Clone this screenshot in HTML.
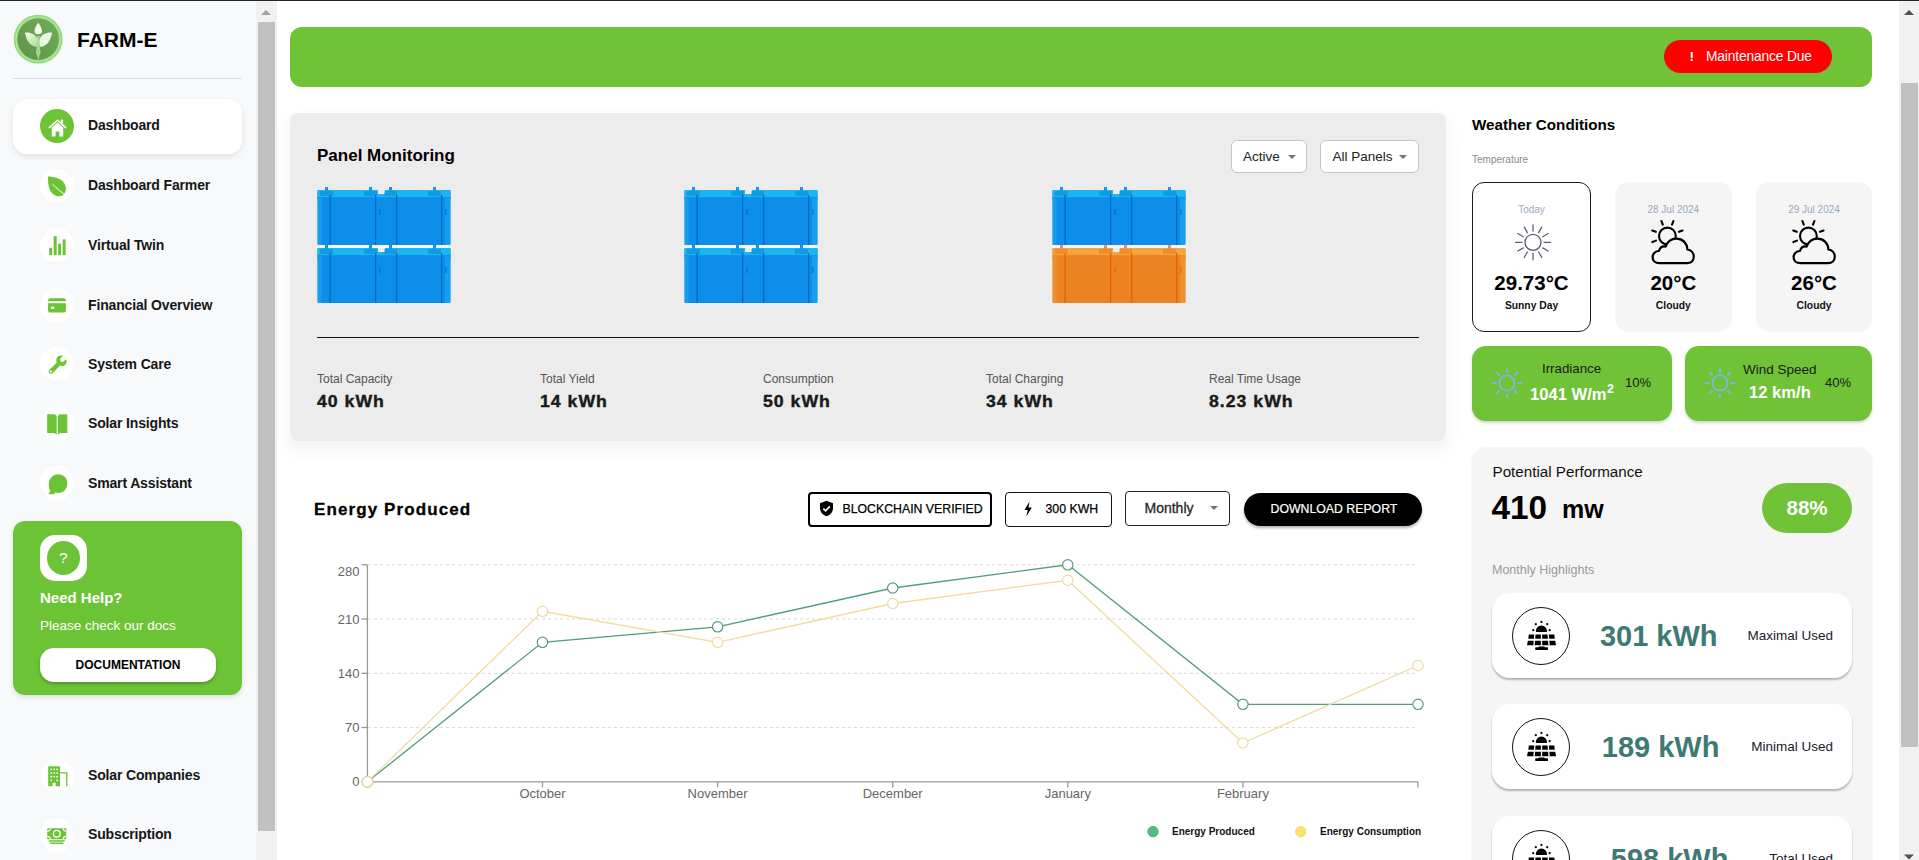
<!DOCTYPE html>
<html><head><meta charset="utf-8">
<style>
*{box-sizing:border-box;margin:0;padding:0}
html,body{width:1919px;height:860px;overflow:hidden;background:#fff;font-family:"Liberation Sans",sans-serif;color:#000}
.a{position:absolute}
.nw{white-space:nowrap}
#topline{left:0;top:0;width:1919px;height:1px;background:#1f2430}
#side{left:0;top:1px;width:256px;height:859px;background:#f8f9fa}
.sb-track{background:#f1f1f1}
.sb-thumb{background:#c1c1c1}
.navic{width:34px;height:34px;border-radius:50%;background:#fff;display:flex;align-items:center;justify-content:center}
.navtx{font-size:14px;font-weight:700;color:#161616;letter-spacing:-0.15px}
.dd{background:#fff;border:1px solid #c4c4c4;border-radius:6px}
.dd span{position:absolute;top:7px;font-size:13.5px;line-height:17px;color:#222;white-space:nowrap}
.dd i{position:absolute;top:14px;width:0;height:0;border-left:4px solid transparent;border-right:4px solid transparent;border-top:4px solid #757575}
.statv{font-size:16.5px;font-weight:700;line-height:19px;color:#1a1a1a;letter-spacing:0.95px;-webkit-text-stroke:0.4px #1a1a1a;transform:scaleX(1.07);transform-origin:0 0}
.ctr{width:120px;text-align:center}
.hcard{width:360px;height:85px;background:#fff;border-radius:18px;box-shadow:0 2px 2px rgba(0,0,0,0.28);display:flex;align-items:center;padding:0 19px 0 20px;justify-content:space-between}
.hcirc{width:58px;height:58px;border:1.8px solid #111;border-radius:50%;display:flex;align-items:center;justify-content:center;flex:none}
.hval{font-size:29px;font-weight:700;color:#3e7a73;line-height:32px;white-space:nowrap}
.hlab{font-size:13.5px;color:#1a1a2a;line-height:16px;white-space:nowrap}
.btx{line-height:15px;color:#000;-webkit-text-stroke:0.25px #000}
</style></head>
<body>
<div id="topline" class="a"></div>
<div id="side" class="a"></div>

<!-- logo -->
<svg class="a" style="left:13px;top:14px" width="50" height="50" viewBox="0 0 50 50">
 <defs><linearGradient id="lg1" x1="0" y1="1" x2="1" y2="0"><stop offset="0" stop-color="#5b9447"/><stop offset="1" stop-color="#72ad5c"/></linearGradient>
 <linearGradient id="lf1" x1="0" y1="0" x2="1" y2="1"><stop offset="0" stop-color="#f4fbef"/><stop offset="1" stop-color="#a9e090"/></linearGradient></defs>
 <circle cx="25.15" cy="25.15" r="24.4" fill="#93da7e"/>
 <circle cx="25.15" cy="25.15" r="22.6" fill="#bfe9ad"/>
 <circle cx="25.15" cy="25.15" r="21.6" fill="#86cf70"/>
 <circle cx="25.15" cy="25.15" r="20.6" fill="url(#lg1)"/>
 <path d="M24 22 H26.5 L27 35.5 C28 37.5 27.6 40 26.5 41 L25.3 46.5 L24 41 C23 40 22.6 37.5 23.5 35.5 Z" fill="#b5dfa0" opacity="0.85"/>
 <path d="M12 18.6 C17 18 22.5 20 24.3 25 C25 28 24.5 31 23.5 33 C18 32.5 13.5 28 12 18.6 Z" fill="url(#lf1)"/>
 <path d="M39.2 18.6 C34 18 28.5 20 26.7 25 C26 28 26.5 31 27.5 33 C33 32.5 37.5 28 39.2 18.6 Z" fill="#eaf7e2"/>
 <path d="M25.2 8.7 C23 11.5 21.4 15 21.6 17.5 C21.8 19.5 23.5 20.3 25.3 20.3 C27.5 20.3 29.2 19 29 17 C28.8 14.5 27.2 11 25.2 8.7 Z" fill="#f3faee"/>
</svg>
<div class="a nw" style="left:77px;top:27.5px;font-size:21px;font-weight:700;line-height:24px">FARM-E</div>
<div class="a" style="left:13px;top:78px;width:229px;height:1px;background:#dcdee2"></div>

<!-- active nav -->
<div class="a" style="left:13px;top:99px;width:229px;height:55px;background:#fff;border-radius:14px;box-shadow:0 3px 6px rgba(0,0,0,0.09)"></div>

<div class="a navic" style="left:40px;top:109px;background:#6cc335"></div><div class="a" style="left:47.5px;top:117.5px;width:19px;height:19px;line-height:0"><svg width="19" height="19" viewBox="0 0 19 19"><path d="M1.3 9.6 L9.5 2.2 L17.7 9.6" stroke="#fff" stroke-width="1.5" fill="none" stroke-linecap="round" stroke-linejoin="round"/><rect x="12.8" y="1.6" width="2.3" height="4.2" fill="#fff"/><path d="M3.8 9.4 L9.5 4.4 L15.2 9.4 V18.5 H11.4 V13.4 H7.6 V18.5 H3.8Z" fill="#fff"/></svg></div>
<div class="a nw navtx" style="left:88px;top:117px;line-height:16px">Dashboard</div>
<div class="a navic" style="left:40px;top:168.7px;background:#fff"></div><div class="a" style="left:47px;top:175.5px;width:21px;height:21px;line-height:0"><svg width="21" height="21" viewBox="0 0 21 21"><path d="M1 0.6 C1 0.6 11.5 0.8 16 5.5 C20 9.7 19.8 16.5 15.8 19.3 C11.5 21.8 5.5 19.5 3 14 C0.8 9.5 1 0.6 1 0.6Z" fill="#6cc335"/><path d="M5.5 8.2 C10 12.5 14.5 16.6 20.5 20.2" stroke="#fff" stroke-width="1" fill="none"/></svg></div>
<div class="a nw navtx" style="left:88px;top:176.6px;line-height:16px">Dashboard Farmer</div>
<div class="a navic" style="left:40px;top:228px;background:#fff"></div><div class="a" style="left:48.5px;top:236px;width:17px;height:20px;line-height:0"><svg width="17" height="20" viewBox="0 0 17 20"><rect x="0.2" y="11.8" width="3" height="7.4" fill="#6cc335"/><rect x="4.7" y="0.2" width="3" height="19" fill="#6cc335"/><rect x="9.1" y="7.7" width="3" height="11.5" fill="#6cc335"/><rect x="13.6" y="3.4" width="3" height="15.8" fill="#6cc335"/></svg></div>
<div class="a nw navtx" style="left:88px;top:236.5px;line-height:16px">Virtual Twin</div>
<div class="a navic" style="left:40px;top:288px;background:#fff"></div><div class="a" style="left:48px;top:297.5px;width:18px;height:15px;line-height:0"><svg width="18" height="15" viewBox="0 0 18 15"><rect x="0.1" y="0.3" width="17.8" height="14.3" rx="2.2" fill="#6cc335"/><rect x="0.1" y="3.2" width="17.8" height="2" fill="#fff"/><rect x="2.8" y="8.6" width="3.6" height="2.3" rx=".5" fill="#fff"/></svg></div>
<div class="a nw navtx" style="left:88px;top:296.5px;line-height:16px">Financial Overview</div>
<div class="a navic" style="left:40px;top:347px;background:#fff"></div><div class="a" style="left:47.5px;top:355px;width:19px;height:19px;line-height:0"><svg width="19" height="19" viewBox="0 0 22 22"><path d="M21 4.6 L17.6 8 L14.6 7.4 L14 4.4 L17.4 1 C14.6 0 11.4 0.8 10.1 3.5 C9.3 5.2 9.4 7.1 10.2 8.6 L1.5 17.3 C0.5 18.3 0.5 20 1.5 21 C2.5 22 4.2 22 5.2 21 L13.9 12.3 C15.5 13 17.3 13 18.9 12.2 C21.5 10.8 22 7.5 21 4.6Z" fill="#6cc335"/><circle cx="3.3" cy="19.2" r="1.3" fill="#fff"/></svg></div>
<div class="a nw navtx" style="left:88px;top:355.5px;line-height:16px">System Care</div>
<div class="a navic" style="left:40px;top:406.5px;background:#fff"></div><div class="a" style="left:47px;top:413.5px;width:20.5px;height:21px;line-height:0"><svg width="20.5" height="21" viewBox="0 0 20.5 21"><path d="M0.2 0.3 H7.5 L9.7 1.8 V20.8 L7.5 19 H0.2Z" fill="#6cc335"/><path d="M20.3 0.3 H13 L10.8 1.8 V20.8 L13 19 H20.3Z" fill="#6cc335"/></svg></div>
<div class="a nw navtx" style="left:88px;top:415px;line-height:16px">Solar Insights</div>
<div class="a navic" style="left:40px;top:466px;background:#fff"></div><div class="a" style="left:48px;top:474px;width:19.5px;height:20.5px;line-height:0"><svg width="19.5" height="20.5" viewBox="0 0 19.5 20.5"><path d="M10.3 0.3 C15.5 0.3 19.3 4 19.3 9.5 C19.3 15 15.5 19 10.3 19 C9.2 19 8 18.8 7 18.5 L6.2 20.2 L0.3 20.3 C1.3 19 2 17.8 2.2 16.5 C1 15 0.6 12.5 0.8 9.8 C1.2 4.3 5 0.3 10.3 0.3Z" fill="#6cc335"/></svg></div>
<div class="a nw navtx" style="left:88px;top:474.5px;line-height:16px">Smart Assistant</div>
<div class="a navic" style="left:40px;top:759px;background:#fff"></div><div class="a" style="left:48px;top:766px;width:19.5px;height:20.5px;line-height:0"><svg width="19.5" height="20.5" viewBox="0 0 19.5 20.5"><path d="M0.2 1.2 Q0.2 0.2 1.2 0.2 H11 Q12 0.2 12 1.2 V20.3 H7.6 V16.8 H4.6 V20.3 H0.2Z" fill="#6cc335"/><path d="M12 6.9 H18.8 V20.3" stroke="#6cc335" stroke-width="1.3" fill="none"/><g fill="#fff"><rect x="2.5" y="2.6" width="1.5" height="1.5"/><rect x="5.5" y="2.6" width="1.5" height="1.5"/><rect x="8.4" y="2.6" width="1.5" height="1.5"/><rect x="2.5" y="6.3" width="1.5" height="1.5"/><rect x="5.5" y="6.3" width="1.5" height="1.5"/><rect x="8.4" y="6.3" width="1.5" height="1.5"/><rect x="2.5" y="10" width="1.5" height="1.5"/><rect x="5.5" y="10" width="1.5" height="1.5"/><rect x="8.4" y="10" width="1.5" height="1.5"/><rect x="2.5" y="13.6" width="1.5" height="1.5"/><rect x="8.4" y="13.6" width="1.5" height="1.5"/></g></svg></div>
<div class="a nw navtx" style="left:88px;top:766.8px;line-height:16px">Solar Companies</div>
<div class="a navic" style="left:40px;top:818.3px;background:#fff"></div><div class="a" style="left:47.3px;top:827.5px;width:19.5px;height:16.5px;line-height:0"><svg width="19.5" height="16.5" viewBox="0 0 19.5 16.5"><rect x="0.2" y="0.3" width="19.1" height="11" rx="1" fill="#6cc335"/><circle cx="9.75" cy="5.8" r="3.4" fill="none" stroke="#fff" stroke-width="1.3"/><path d="M0.2 3.4 Q3 3.4 3.4 0.3 M19.3 3.4 Q16.5 3.4 16.1 0.3 M0.2 8.3 Q3 8.3 3.4 11.3 M19.3 8.3 Q16.5 8.3 16.1 11.3" stroke="#fff" stroke-width="1.1" fill="none"/><rect x="1.8" y="12.2" width="15.9" height="1.5" fill="#6cc335"/><rect x="3" y="14.6" width="13.5" height="1.6" rx=".4" fill="#6cc335"/></svg></div>
<div class="a nw navtx" style="left:88px;top:826px;line-height:16px">Subscription</div>
<!-- need help -->
<div class="a" style="left:13px;top:521px;width:229px;height:174px;background:#6cc335;border-radius:12px;box-shadow:0 2px 5px rgba(0,0,0,0.12)"></div>
<div class="a" style="left:40px;top:535px;width:47px;height:46px;background:#fff;border-radius:15px"></div>
<div class="a" style="left:46.5px;top:541px;width:33.5px;height:34px;background:#6cc335;border-radius:50%;color:#fff;font-size:15.5px;text-align:center;line-height:34px">?</div>
<div class="a nw" style="left:40px;top:589px;font-size:15px;font-weight:700;color:#fff;line-height:18px">Need Help?</div>
<div class="a nw" style="left:40px;top:617px;font-size:13.5px;color:#fff;line-height:17px">Please check our docs</div>
<div class="a" style="left:40px;top:648px;width:176px;height:34px;background:#fff;border-radius:14px;box-shadow:0 2px 3px rgba(0,0,0,0.25);font-size:12px;font-weight:700;text-align:center;line-height:34px;color:#000">DOCUMENTATION</div>

<!-- sidebar scrollbar -->
<div class="a sb-track" style="left:256px;top:1px;width:21px;height:859px"></div>
<div class="a sb-thumb" style="left:258px;top:22px;width:17px;height:809px"></div>
<svg class="a" style="left:260px;top:8px" width="12" height="8"><path d="M1 7 L6 2 L11 7Z" fill="#a3a3a3"/></svg>


<!-- banner -->
<div class="a" style="left:290px;top:27px;width:1582px;height:60px;background:#70c337;border-radius:12px"></div>
<div class="a" style="left:1664px;top:40px;width:168px;height:33px;background:#ff0000;border-radius:17px"></div>
<div class="a nw" style="left:1689.5px;top:48px;font-size:13.5px;font-weight:700;color:#fff;line-height:17px">!</div>
<div class="a nw" style="left:1706px;top:47.5px;font-size:13.8px;color:#fff;line-height:17px;letter-spacing:-0.15px">Maintenance Due</div>

<!-- panel monitoring card -->
<div class="a" style="left:290px;top:113px;width:1156px;height:328px;background:#ececec;border-radius:8px;box-shadow:0 8px 18px rgba(40,60,110,0.07)"></div>
<div class="a nw" style="left:317px;top:146px;font-size:17px;font-weight:700;line-height:20px">Panel Monitoring</div>
<div class="a dd" style="left:1231px;top:140px;width:76px;height:32.5px"><span style="left:11px">Active</span><i style="left:56px"></i></div>
<div class="a dd" style="left:1320px;top:140px;width:99px;height:32.5px"><span style="left:11.5px">All Panels</span><i style="left:78px"></i></div>
<!-- batteries -->
<div class="a" style="left:317px;top:244.5px;width:134px;height:3.5px;background:#f7f4f4"></div>
<div class="a" style="left:684px;top:244.5px;width:134px;height:3.5px;background:#f7f4f4"></div>
<div class="a" style="left:1052px;top:244.5px;width:134px;height:3.5px;background:#f7f4f4"></div>
<svg class="a" style="left:317px;top:187px" width="134" height="58" viewBox="0 0 134 58"><rect x="0.5" y="3" width="133" height="55" rx="1.5" fill="#0c8ee9"/><rect x="0.5" y="3" width="133" height="8" fill="#1ab6f2"/><rect x="0.5" y="10" width="133" height="4" fill="#0c8ee9" opacity="0.9"/><rect x="0.5" y="11" width="4" height="47" fill="#22a8f2" opacity="0.6"/><rect x="128" y="11" width="5.5" height="47" fill="#22a8f2" opacity="0.6"/><rect x="61" y="3" width="7" height="4" fill="#ececec"/><rect x="8" y="0" width="3" height="4" fill="#1296e8"/><rect x="3" y="4" width="13" height="5" fill="#0868cc" opacity="0.35"/><rect x="52" y="0" width="3" height="4" fill="#1296e8"/><rect x="47" y="4" width="13" height="5" fill="#0868cc" opacity="0.35"/><rect x="72" y="0" width="3" height="4" fill="#1296e8"/><rect x="67" y="4" width="13" height="5" fill="#0868cc" opacity="0.35"/><rect x="116" y="0" width="3" height="4" fill="#1296e8"/><rect x="111" y="4" width="13" height="5" fill="#0868cc" opacity="0.35"/><rect x="12.5" y="8" width="1.3" height="50" fill="#0868cc"/><rect x="58" y="8" width="1.3" height="50" fill="#0868cc"/><rect x="79" y="8" width="1.3" height="50" fill="#0868cc"/><rect x="124" y="8" width="1.3" height="50" fill="#0868cc"/><rect x="62" y="22" width="1.6" height="6" fill="#0868cc" opacity="0.7"/><rect x="128" y="22" width="1.6" height="6" fill="#0868cc" opacity="0.7"/></svg>
<svg class="a" style="left:317px;top:245px" width="134" height="58" viewBox="0 0 134 58"><rect x="0.5" y="3" width="133" height="55" rx="1.5" fill="#0c8ee9"/><rect x="0.5" y="3" width="133" height="8" fill="#1ab6f2"/><rect x="0.5" y="10" width="133" height="4" fill="#0c8ee9" opacity="0.9"/><rect x="0.5" y="11" width="4" height="47" fill="#22a8f2" opacity="0.6"/><rect x="128" y="11" width="5.5" height="47" fill="#22a8f2" opacity="0.6"/><rect x="61" y="3" width="7" height="4" fill="#ececec"/><rect x="8" y="0" width="3" height="4" fill="#1296e8"/><rect x="3" y="4" width="13" height="5" fill="#0868cc" opacity="0.35"/><rect x="52" y="0" width="3" height="4" fill="#1296e8"/><rect x="47" y="4" width="13" height="5" fill="#0868cc" opacity="0.35"/><rect x="72" y="0" width="3" height="4" fill="#1296e8"/><rect x="67" y="4" width="13" height="5" fill="#0868cc" opacity="0.35"/><rect x="116" y="0" width="3" height="4" fill="#1296e8"/><rect x="111" y="4" width="13" height="5" fill="#0868cc" opacity="0.35"/><rect x="12.5" y="8" width="1.3" height="50" fill="#0868cc"/><rect x="58" y="8" width="1.3" height="50" fill="#0868cc"/><rect x="79" y="8" width="1.3" height="50" fill="#0868cc"/><rect x="124" y="8" width="1.3" height="50" fill="#0868cc"/><rect x="62" y="22" width="1.6" height="6" fill="#0868cc" opacity="0.7"/><rect x="128" y="22" width="1.6" height="6" fill="#0868cc" opacity="0.7"/></svg>
<svg class="a" style="left:684px;top:187px" width="134" height="58" viewBox="0 0 134 58"><rect x="0.5" y="3" width="133" height="55" rx="1.5" fill="#0c8ee9"/><rect x="0.5" y="3" width="133" height="8" fill="#1ab6f2"/><rect x="0.5" y="10" width="133" height="4" fill="#0c8ee9" opacity="0.9"/><rect x="0.5" y="11" width="4" height="47" fill="#22a8f2" opacity="0.6"/><rect x="128" y="11" width="5.5" height="47" fill="#22a8f2" opacity="0.6"/><rect x="61" y="3" width="7" height="4" fill="#ececec"/><rect x="8" y="0" width="3" height="4" fill="#1296e8"/><rect x="3" y="4" width="13" height="5" fill="#0868cc" opacity="0.35"/><rect x="52" y="0" width="3" height="4" fill="#1296e8"/><rect x="47" y="4" width="13" height="5" fill="#0868cc" opacity="0.35"/><rect x="72" y="0" width="3" height="4" fill="#1296e8"/><rect x="67" y="4" width="13" height="5" fill="#0868cc" opacity="0.35"/><rect x="116" y="0" width="3" height="4" fill="#1296e8"/><rect x="111" y="4" width="13" height="5" fill="#0868cc" opacity="0.35"/><rect x="12.5" y="8" width="1.3" height="50" fill="#0868cc"/><rect x="58" y="8" width="1.3" height="50" fill="#0868cc"/><rect x="79" y="8" width="1.3" height="50" fill="#0868cc"/><rect x="124" y="8" width="1.3" height="50" fill="#0868cc"/><rect x="62" y="22" width="1.6" height="6" fill="#0868cc" opacity="0.7"/><rect x="128" y="22" width="1.6" height="6" fill="#0868cc" opacity="0.7"/></svg>
<svg class="a" style="left:684px;top:245px" width="134" height="58" viewBox="0 0 134 58"><rect x="0.5" y="3" width="133" height="55" rx="1.5" fill="#0c8ee9"/><rect x="0.5" y="3" width="133" height="8" fill="#1ab6f2"/><rect x="0.5" y="10" width="133" height="4" fill="#0c8ee9" opacity="0.9"/><rect x="0.5" y="11" width="4" height="47" fill="#22a8f2" opacity="0.6"/><rect x="128" y="11" width="5.5" height="47" fill="#22a8f2" opacity="0.6"/><rect x="61" y="3" width="7" height="4" fill="#ececec"/><rect x="8" y="0" width="3" height="4" fill="#1296e8"/><rect x="3" y="4" width="13" height="5" fill="#0868cc" opacity="0.35"/><rect x="52" y="0" width="3" height="4" fill="#1296e8"/><rect x="47" y="4" width="13" height="5" fill="#0868cc" opacity="0.35"/><rect x="72" y="0" width="3" height="4" fill="#1296e8"/><rect x="67" y="4" width="13" height="5" fill="#0868cc" opacity="0.35"/><rect x="116" y="0" width="3" height="4" fill="#1296e8"/><rect x="111" y="4" width="13" height="5" fill="#0868cc" opacity="0.35"/><rect x="12.5" y="8" width="1.3" height="50" fill="#0868cc"/><rect x="58" y="8" width="1.3" height="50" fill="#0868cc"/><rect x="79" y="8" width="1.3" height="50" fill="#0868cc"/><rect x="124" y="8" width="1.3" height="50" fill="#0868cc"/><rect x="62" y="22" width="1.6" height="6" fill="#0868cc" opacity="0.7"/><rect x="128" y="22" width="1.6" height="6" fill="#0868cc" opacity="0.7"/></svg>
<svg class="a" style="left:1052px;top:187px" width="134" height="58" viewBox="0 0 134 58"><rect x="0.5" y="3" width="133" height="55" rx="1.5" fill="#0c8ee9"/><rect x="0.5" y="3" width="133" height="8" fill="#1ab6f2"/><rect x="0.5" y="10" width="133" height="4" fill="#0c8ee9" opacity="0.9"/><rect x="0.5" y="11" width="4" height="47" fill="#22a8f2" opacity="0.6"/><rect x="128" y="11" width="5.5" height="47" fill="#22a8f2" opacity="0.6"/><rect x="61" y="3" width="7" height="4" fill="#ececec"/><rect x="8" y="0" width="3" height="4" fill="#1296e8"/><rect x="3" y="4" width="13" height="5" fill="#0868cc" opacity="0.35"/><rect x="52" y="0" width="3" height="4" fill="#1296e8"/><rect x="47" y="4" width="13" height="5" fill="#0868cc" opacity="0.35"/><rect x="72" y="0" width="3" height="4" fill="#1296e8"/><rect x="67" y="4" width="13" height="5" fill="#0868cc" opacity="0.35"/><rect x="116" y="0" width="3" height="4" fill="#1296e8"/><rect x="111" y="4" width="13" height="5" fill="#0868cc" opacity="0.35"/><rect x="12.5" y="8" width="1.3" height="50" fill="#0868cc"/><rect x="58" y="8" width="1.3" height="50" fill="#0868cc"/><rect x="79" y="8" width="1.3" height="50" fill="#0868cc"/><rect x="124" y="8" width="1.3" height="50" fill="#0868cc"/><rect x="62" y="22" width="1.6" height="6" fill="#0868cc" opacity="0.7"/><rect x="128" y="22" width="1.6" height="6" fill="#0868cc" opacity="0.7"/></svg>
<svg class="a" style="left:1052px;top:245px" width="134" height="58" viewBox="0 0 134 58"><rect x="0.5" y="3" width="133" height="55" rx="1.5" fill="#ec8322"/><rect x="0.5" y="3" width="133" height="8" fill="#f4a540"/><rect x="0.5" y="10" width="133" height="4" fill="#ec8322" opacity="0.9"/><rect x="0.5" y="11" width="4" height="47" fill="#f09a3a" opacity="0.6"/><rect x="128" y="11" width="5.5" height="47" fill="#f09a3a" opacity="0.6"/><rect x="61" y="3" width="7" height="4" fill="#ececec"/><rect x="8" y="0" width="3" height="4" fill="#f08a60"/><rect x="3" y="4" width="13" height="5" fill="#e2620e" opacity="0.35"/><rect x="52" y="0" width="3" height="4" fill="#f08a60"/><rect x="47" y="4" width="13" height="5" fill="#e2620e" opacity="0.35"/><rect x="72" y="0" width="3" height="4" fill="#f08a60"/><rect x="67" y="4" width="13" height="5" fill="#e2620e" opacity="0.35"/><rect x="116" y="0" width="3" height="4" fill="#f08a60"/><rect x="111" y="4" width="13" height="5" fill="#e2620e" opacity="0.35"/><rect x="12.5" y="8" width="1.3" height="50" fill="#e2620e"/><rect x="58" y="8" width="1.3" height="50" fill="#e2620e"/><rect x="79" y="8" width="1.3" height="50" fill="#e2620e"/><rect x="124" y="8" width="1.3" height="50" fill="#e2620e"/><rect x="62" y="22" width="1.6" height="6" fill="#e2620e" opacity="0.7"/><rect x="128" y="22" width="1.6" height="6" fill="#e2620e" opacity="0.7"/></svg>
<div class="a" style="left:317px;top:337px;width:1102px;height:1px;background:#111"></div>
<div class="a nw" style="left:317px;top:372px;font-size:12px;color:#555;line-height:15px">Total Capacity</div>
<div class="a nw statv" style="left:317px;top:392px">40 kWh</div>
<div class="a nw" style="left:540px;top:372px;font-size:12px;color:#555;line-height:15px">Total Yield</div>
<div class="a nw statv" style="left:540px;top:392px">14 kWh</div>
<div class="a nw" style="left:763px;top:372px;font-size:12px;color:#555;line-height:15px">Consumption</div>
<div class="a nw statv" style="left:763px;top:392px">50 kWh</div>
<div class="a nw" style="left:986px;top:372px;font-size:12px;color:#555;line-height:15px">Total Charging</div>
<div class="a nw statv" style="left:986px;top:392px">34 kWh</div>
<div class="a nw" style="left:1209px;top:372px;font-size:12px;color:#555;line-height:15px">Real Time Usage</div>
<div class="a nw statv" style="left:1209px;top:392px">8.23 kWh</div>


<!-- weather -->
<div class="a nw" style="left:1472px;top:115.7px;font-size:15.2px;font-weight:700;line-height:18px">Weather Conditions</div>
<div class="a nw" style="left:1472px;top:154px;font-size:10px;color:#8a8a8a;line-height:12px">Temperature</div>
<div class="a" style="left:1472px;top:182px;width:119px;height:150px;background:#fff;border:1.3px solid #1a1a1a;border-radius:12px"></div>
<div class="a" style="left:1615px;top:182px;width:117px;height:150px;background:#f5f5f5;border-radius:14px"></div>
<div class="a" style="left:1756px;top:182px;width:116px;height:150px;background:#f5f5f5;border-radius:14px"></div>
<svg class="a" style="left:1513px;top:222px" width="40" height="40" viewBox="0 0 40 40"><circle cx="20" cy="20.3" r="8" fill="none" stroke="#5a6270" stroke-width="1.3"/><line x1="31.20" y1="20.30" x2="37.50" y2="20.30" stroke="#5a6270" stroke-width="1.3" stroke-linecap="round"/><line x1="29.70" y1="25.90" x2="35.16" y2="29.05" stroke="#5a6270" stroke-width="1.3" stroke-linecap="round"/><line x1="25.60" y1="30.00" x2="28.75" y2="35.46" stroke="#5a6270" stroke-width="1.3" stroke-linecap="round"/><line x1="20.00" y1="31.50" x2="20.00" y2="37.80" stroke="#5a6270" stroke-width="1.3" stroke-linecap="round"/><line x1="14.40" y1="30.00" x2="11.25" y2="35.46" stroke="#5a6270" stroke-width="1.3" stroke-linecap="round"/><line x1="10.30" y1="25.90" x2="4.84" y2="29.05" stroke="#5a6270" stroke-width="1.3" stroke-linecap="round"/><line x1="8.80" y1="20.30" x2="2.50" y2="20.30" stroke="#5a6270" stroke-width="1.3" stroke-linecap="round"/><line x1="10.30" y1="14.70" x2="4.84" y2="11.55" stroke="#5a6270" stroke-width="1.3" stroke-linecap="round"/><line x1="14.40" y1="10.60" x2="11.25" y2="5.14" stroke="#5a6270" stroke-width="1.3" stroke-linecap="round"/><line x1="20.00" y1="9.10" x2="20.00" y2="2.80" stroke="#5a6270" stroke-width="1.3" stroke-linecap="round"/><line x1="25.60" y1="10.60" x2="28.75" y2="5.14" stroke="#5a6270" stroke-width="1.3" stroke-linecap="round"/><line x1="29.70" y1="14.70" x2="35.16" y2="11.55" stroke="#5a6270" stroke-width="1.3" stroke-linecap="round"/></svg><svg class="a" style="left:1650px;top:219px" width="46" height="46" viewBox="0 0 46 46"><circle cx="17.4" cy="17" r="8.4" fill="none" stroke="#000" stroke-width="2.1"/><line x1="12.79" y1="5.60" x2="11.33" y2="1.98" stroke="#000" stroke-width="2.1" stroke-linecap="round"/><line x1="22.01" y1="5.60" x2="23.47" y2="1.98" stroke="#000" stroke-width="2.1" stroke-linecap="round"/><line x1="28.96" y1="12.79" x2="32.62" y2="11.46" stroke="#000" stroke-width="2.1" stroke-linecap="round"/><line x1="5.84" y1="12.79" x2="2.18" y2="11.46" stroke="#000" stroke-width="2.1" stroke-linecap="round"/><line x1="6.00" y1="21.61" x2="2.38" y2="23.07" stroke="#000" stroke-width="2.1" stroke-linecap="round"/><path d="M9.5 44.2 C5 44.2 2.6 41.5 2.6 38.2 C2.6 34.5 5.6 32 9 32 C10 28.5 12.5 27 15.6 27.6 C17.5 22.5 21.5 19.6 26.4 19.6 C32.5 19.6 37 24 37.4 30.4 C41.2 31 43.8 34 43.8 37.6 C43.8 41.5 41 44.2 37 44.2Z" fill="#f5f5f5" stroke="#000" stroke-width="2.2" stroke-linejoin="round"/></svg><svg class="a" style="left:1791px;top:219px" width="46" height="46" viewBox="0 0 46 46"><circle cx="17.4" cy="17" r="8.4" fill="none" stroke="#000" stroke-width="2.1"/><line x1="12.79" y1="5.60" x2="11.33" y2="1.98" stroke="#000" stroke-width="2.1" stroke-linecap="round"/><line x1="22.01" y1="5.60" x2="23.47" y2="1.98" stroke="#000" stroke-width="2.1" stroke-linecap="round"/><line x1="28.96" y1="12.79" x2="32.62" y2="11.46" stroke="#000" stroke-width="2.1" stroke-linecap="round"/><line x1="5.84" y1="12.79" x2="2.18" y2="11.46" stroke="#000" stroke-width="2.1" stroke-linecap="round"/><line x1="6.00" y1="21.61" x2="2.38" y2="23.07" stroke="#000" stroke-width="2.1" stroke-linecap="round"/><path d="M9.5 44.2 C5 44.2 2.6 41.5 2.6 38.2 C2.6 34.5 5.6 32 9 32 C10 28.5 12.5 27 15.6 27.6 C17.5 22.5 21.5 19.6 26.4 19.6 C32.5 19.6 37 24 37.4 30.4 C41.2 31 43.8 34 43.8 37.6 C43.8 41.5 41 44.2 37 44.2Z" fill="#f5f5f5" stroke="#000" stroke-width="2.2" stroke-linejoin="round"/></svg><div class="a nw ctr" style="left:1471.5px;top:204px;font-size:10px;color:#9aa9bb;line-height:12px">Today</div><div class="a nw ctr" style="left:1471.5px;top:272px;font-size:20.5px;font-weight:700;line-height:22px">29.73°C</div><div class="a nw ctr" style="left:1471.5px;top:300px;font-size:10.3px;font-weight:700;line-height:12px;color:#111">Sunny Day</div>
<div class="a nw ctr" style="left:1613.3px;top:204px;font-size:10px;color:#9aa9bb;line-height:12px">28 Jul 2024</div><div class="a nw ctr" style="left:1613.3px;top:272px;font-size:20.5px;font-weight:700;line-height:22px">20°C</div><div class="a nw ctr" style="left:1613.3px;top:300px;font-size:10.3px;font-weight:700;line-height:12px;color:#111">Cloudy</div>
<div class="a nw ctr" style="left:1754px;top:204px;font-size:10px;color:#9aa9bb;line-height:12px">29 Jul 2024</div><div class="a nw ctr" style="left:1754px;top:272px;font-size:20.5px;font-weight:700;line-height:22px">26°C</div><div class="a nw ctr" style="left:1754px;top:300px;font-size:10.3px;font-weight:700;line-height:12px;color:#111">Cloudy</div>

<div class="a" style="left:1472px;top:346px;width:200px;height:75px;background:#70c337;border-radius:14px;box-shadow:0 2px 3px rgba(0,0,0,0.18)"></div>
<div class="a" style="left:1685px;top:346px;width:187px;height:75px;background:#70c337;border-radius:14px;box-shadow:0 2px 3px rgba(0,0,0,0.18)"></div>
<svg class="a" style="left:1491px;top:367px" width="32" height="32" viewBox="0 0 32 32"><circle cx="16" cy="16" r="7.6" fill="none" stroke="#7ab8e4" stroke-width="1.8"/><line x1="27.20" y1="16.00" x2="30.60" y2="16.00" stroke="#7ab8e4" stroke-width="1.8" stroke-linecap="round"/><line x1="23.92" y1="23.92" x2="26.32" y2="26.32" stroke="#7ab8e4" stroke-width="1.8" stroke-linecap="round"/><line x1="16.00" y1="27.20" x2="16.00" y2="30.60" stroke="#7ab8e4" stroke-width="1.8" stroke-linecap="round"/><line x1="8.08" y1="23.92" x2="5.68" y2="26.32" stroke="#7ab8e4" stroke-width="1.8" stroke-linecap="round"/><line x1="4.80" y1="16.00" x2="1.40" y2="16.00" stroke="#7ab8e4" stroke-width="1.8" stroke-linecap="round"/><line x1="8.08" y1="8.08" x2="5.68" y2="5.68" stroke="#7ab8e4" stroke-width="1.8" stroke-linecap="round"/><line x1="16.00" y1="4.80" x2="16.00" y2="1.40" stroke="#7ab8e4" stroke-width="1.8" stroke-linecap="round"/><line x1="23.92" y1="8.08" x2="26.32" y2="5.68" stroke="#7ab8e4" stroke-width="1.8" stroke-linecap="round"/></svg><svg class="a" style="left:1704px;top:367px" width="32" height="32" viewBox="0 0 32 32"><circle cx="16" cy="16" r="7.6" fill="none" stroke="#7ab8e4" stroke-width="1.8"/><line x1="27.20" y1="16.00" x2="30.60" y2="16.00" stroke="#7ab8e4" stroke-width="1.8" stroke-linecap="round"/><line x1="23.92" y1="23.92" x2="26.32" y2="26.32" stroke="#7ab8e4" stroke-width="1.8" stroke-linecap="round"/><line x1="16.00" y1="27.20" x2="16.00" y2="30.60" stroke="#7ab8e4" stroke-width="1.8" stroke-linecap="round"/><line x1="8.08" y1="23.92" x2="5.68" y2="26.32" stroke="#7ab8e4" stroke-width="1.8" stroke-linecap="round"/><line x1="4.80" y1="16.00" x2="1.40" y2="16.00" stroke="#7ab8e4" stroke-width="1.8" stroke-linecap="round"/><line x1="8.08" y1="8.08" x2="5.68" y2="5.68" stroke="#7ab8e4" stroke-width="1.8" stroke-linecap="round"/><line x1="16.00" y1="4.80" x2="16.00" y2="1.40" stroke="#7ab8e4" stroke-width="1.8" stroke-linecap="round"/><line x1="23.92" y1="8.08" x2="26.32" y2="5.68" stroke="#7ab8e4" stroke-width="1.8" stroke-linecap="round"/></svg>
<div class="a nw" style="left:1542px;top:361px;font-size:13.3px;color:#1a1a1a;line-height:15px">Irradiance</div>
<div class="a nw" style="left:1530px;top:386px;font-size:16.6px;font-weight:700;color:#fff;line-height:18px">1041 W/m<sup style="font-size:12.5px;vertical-align:7px;line-height:0;margin-left:0.5px">2</sup></div>
<div class="a nw" style="left:1625px;top:375px;font-size:13px;color:#1a1a1a;line-height:15px">10%</div>
<div class="a nw" style="left:1743px;top:362px;font-size:13.5px;color:#1a1a1a;line-height:15px">Wind Speed</div>
<div class="a nw" style="left:1749px;top:384px;font-size:16.6px;font-weight:700;color:#fff;line-height:18px">12 km/h</div>
<div class="a nw" style="left:1825px;top:375px;font-size:13px;color:#1a1a1a;line-height:15px">40%</div>

<!-- potential performance -->
<div class="a" style="left:1471px;top:447px;width:402px;height:430px;background:#f5f5f5;border-radius:16px"></div>
<div class="a nw" style="left:1492.5px;top:463px;font-size:15.2px;color:#111;line-height:18px">Potential Performance</div>
<div class="a nw" style="left:1491.5px;top:490px;font-size:33.3px;font-weight:700;line-height:36px;color:#000">410</div>
<div class="a nw" style="left:1562px;top:494px;font-size:25px;font-weight:700;line-height:30px;color:#000">mw</div>
<div class="a" style="left:1762px;top:483px;width:90px;height:50px;background:#70c337;border-radius:25px;color:#fff;font-size:20.5px;font-weight:700;text-align:center;line-height:50px">88%</div>
<div class="a nw" style="left:1492px;top:562.7px;font-size:12.5px;color:#999;line-height:15px">Monthly Highlights</div>
<div class="a hcard" style="left:1492px;top:593px"><div class="hcirc"><svg width="31" height="31" viewBox="0 0 31 31"><g fill="#000"><circle cx="15.4" cy="1.9" r="1.1"/><circle cx="9.8" cy="4.2" r="1.1"/><circle cx="21.2" cy="4.2" r="1.1"/><circle cx="7.2" cy="10.2" r="1.1"/><circle cx="23.7" cy="10.2" r="1.1"/><path d="M10 12 A5.5 5.5 0 1 1 20.8 12 Z"/><path d="M2.8 14.4 H28.3 L28.8 18.8 H2.3Z"/><path d="M1.9 20.8 H29.2 L30 25.2 H1Z"/><rect x="9.2" y="27.3" width="12.8" height="2.6" rx="0.6"/><rect x="12.5" y="26.4" width="6.2" height="1.6" rx="0.5"/></g><g stroke="#fff" stroke-width="1.3"><line x1="8.9" y1="14" x2="8.0" y2="25.6"/><line x1="15.5" y1="14" x2="15.5" y2="25.6"/><line x1="22.2" y1="14" x2="23.1" y2="25.6"/></g></svg></div><div class="hval">301 kWh</div><div class="hlab">Maximal Used</div></div>
<div class="a hcard" style="left:1492px;top:704px"><div class="hcirc"><svg width="31" height="31" viewBox="0 0 31 31"><g fill="#000"><circle cx="15.4" cy="1.9" r="1.1"/><circle cx="9.8" cy="4.2" r="1.1"/><circle cx="21.2" cy="4.2" r="1.1"/><circle cx="7.2" cy="10.2" r="1.1"/><circle cx="23.7" cy="10.2" r="1.1"/><path d="M10 12 A5.5 5.5 0 1 1 20.8 12 Z"/><path d="M2.8 14.4 H28.3 L28.8 18.8 H2.3Z"/><path d="M1.9 20.8 H29.2 L30 25.2 H1Z"/><rect x="9.2" y="27.3" width="12.8" height="2.6" rx="0.6"/><rect x="12.5" y="26.4" width="6.2" height="1.6" rx="0.5"/></g><g stroke="#fff" stroke-width="1.3"><line x1="8.9" y1="14" x2="8.0" y2="25.6"/><line x1="15.5" y1="14" x2="15.5" y2="25.6"/><line x1="22.2" y1="14" x2="23.1" y2="25.6"/></g></svg></div><div class="hval">189 kWh</div><div class="hlab">Minimal Used</div></div>
<div class="a hcard" style="left:1492px;top:816px"><div class="hcirc"><svg width="31" height="31" viewBox="0 0 31 31"><g fill="#000"><circle cx="15.4" cy="1.9" r="1.1"/><circle cx="9.8" cy="4.2" r="1.1"/><circle cx="21.2" cy="4.2" r="1.1"/><circle cx="7.2" cy="10.2" r="1.1"/><circle cx="23.7" cy="10.2" r="1.1"/><path d="M10 12 A5.5 5.5 0 1 1 20.8 12 Z"/><path d="M2.8 14.4 H28.3 L28.8 18.8 H2.3Z"/><path d="M1.9 20.8 H29.2 L30 25.2 H1Z"/><rect x="9.2" y="27.3" width="12.8" height="2.6" rx="0.6"/><rect x="12.5" y="26.4" width="6.2" height="1.6" rx="0.5"/></g><g stroke="#fff" stroke-width="1.3"><line x1="8.9" y1="14" x2="8.0" y2="25.6"/><line x1="15.5" y1="14" x2="15.5" y2="25.6"/><line x1="22.2" y1="14" x2="23.1" y2="25.6"/></g></svg></div><div class="hval">598 kWh</div><div class="hlab">Total Used</div></div>


<!-- energy produced -->
<div class="a nw" style="left:314px;top:500px;font-size:17px;font-weight:700;line-height:20px;letter-spacing:1.1px;-webkit-text-stroke:0.3px #000">Energy Produced</div>
<div class="a" style="left:808px;top:492px;width:184px;height:34.5px;border:2px solid #000;border-radius:4px;background:#fff"></div>
<svg class="a" style="left:819px;top:500px" width="15" height="17" viewBox="0 0 15 17"><path d="M7.5 0.8 L14 3.3 V8 C14 12 11.2 15 7.5 16.3 C3.8 15 1 12 1 8 V3.3Z" fill="#000"/><path d="M4.3 8.6 L6.6 10.8 L10.8 6.4" stroke="#fff" stroke-width="1.6" fill="none"/></svg>
<div class="a nw btx" style="left:842.5px;top:502px;font-size:12.3px">BLOCKCHAIN VERIFIED</div>
<div class="a" style="left:1005px;top:492px;width:107px;height:34.5px;border:1.4px solid #111;border-radius:4px;background:#fff"></div>
<svg class="a" style="left:1023px;top:501px" width="10" height="16" viewBox="0 0 10 16"><path d="M6.5 0.5 L1.5 9 H4.8 L3.3 15.6 L8.8 6.6 H5.5 Z" fill="#000"/></svg>
<div class="a nw btx" style="left:1045.5px;top:501.8px;font-size:12.3px">300 KWH</div>
<div class="a" style="left:1125px;top:491px;width:105px;height:35px;border:1.5px solid #222;border-radius:4px;background:#fff"></div>
<div class="a nw" style="left:1144.5px;top:500px;font-size:14px;line-height:16px;color:#262626;-webkit-text-stroke:0.3px #262626">Monthly</div>
<div class="a" style="left:1210px;top:506px;width:0;height:0;border-left:4.5px solid transparent;border-right:4.5px solid transparent;border-top:4.5px solid #757575"></div>
<div class="a" style="left:1244px;top:493px;width:178px;height:33px;background:#000;border-radius:17px;box-shadow:0 2px 3px rgba(0,0,0,0.3)"></div>
<div class="a nw btx" style="left:1270.5px;top:502px;font-size:12.3px;color:#fff;-webkit-text-stroke:0.2px #fff">DOWNLOAD REPORT</div>
<svg class="a" style="left:300px;top:540px" width="1150" height="310" viewBox="300 539.6 1150 310"><line x1="368" y1="564.4" x2="1418" y2="564.4" stroke="#d9d9d9" stroke-width="1" stroke-dasharray="3 3"/><line x1="368" y1="618.6" x2="1418" y2="618.6" stroke="#d9d9d9" stroke-width="1" stroke-dasharray="3 3"/><line x1="368" y1="672.9" x2="1418" y2="672.9" stroke="#d9d9d9" stroke-width="1" stroke-dasharray="3 3"/><line x1="368" y1="727.1" x2="1418" y2="727.1" stroke="#d9d9d9" stroke-width="1" stroke-dasharray="3 3"/><line x1="367.4" y1="564.4" x2="367.4" y2="781.4" stroke="#999" stroke-width="1.3"/><line x1="367.4" y1="781.4" x2="1418" y2="781.4" stroke="#999" stroke-width="1.3"/><line x1="361.5" y1="564.4" x2="367.4" y2="564.4" stroke="#999" stroke-width="1.3"/><line x1="361.5" y1="618.6" x2="367.4" y2="618.6" stroke="#999" stroke-width="1.3"/><line x1="361.5" y1="672.9" x2="367.4" y2="672.9" stroke="#999" stroke-width="1.3"/><line x1="361.5" y1="727.1" x2="367.4" y2="727.1" stroke="#999" stroke-width="1.3"/><line x1="361.5" y1="781.4" x2="367.4" y2="781.4" stroke="#999" stroke-width="1.3"/><line x1="542.5" y1="781.4" x2="542.5" y2="787" stroke="#999" stroke-width="1.3"/><line x1="717.6" y1="781.4" x2="717.6" y2="787" stroke="#999" stroke-width="1.3"/><line x1="892.7" y1="781.4" x2="892.7" y2="787" stroke="#999" stroke-width="1.3"/><line x1="1067.8" y1="781.4" x2="1067.8" y2="787" stroke="#999" stroke-width="1.3"/><line x1="1242.9" y1="781.4" x2="1242.9" y2="787" stroke="#999" stroke-width="1.3"/><line x1="1418.0" y1="781.4" x2="1418.0" y2="787" stroke="#999" stroke-width="1.3"/><text x="359.5" y="576.1" text-anchor="end" font-family="Liberation Sans" font-size="13" fill="#666">280</text><text x="359.5" y="623.2" text-anchor="end" font-family="Liberation Sans" font-size="13" fill="#666">210</text><text x="359.5" y="677.5" text-anchor="end" font-family="Liberation Sans" font-size="13" fill="#666">140</text><text x="359.5" y="731.8" text-anchor="end" font-family="Liberation Sans" font-size="13" fill="#666">70</text><text x="359.5" y="786.0" text-anchor="end" font-family="Liberation Sans" font-size="13" fill="#666">0</text><text x="542.5" y="798" text-anchor="middle" font-family="Liberation Sans" font-size="13" fill="#666">October</text><text x="717.6" y="798" text-anchor="middle" font-family="Liberation Sans" font-size="13" fill="#666">November</text><text x="892.7" y="798" text-anchor="middle" font-family="Liberation Sans" font-size="13" fill="#666">December</text><text x="1067.8" y="798" text-anchor="middle" font-family="Liberation Sans" font-size="13" fill="#666">January</text><text x="1242.9" y="798" text-anchor="middle" font-family="Liberation Sans" font-size="13" fill="#666">February</text><polyline points="367.4,781.4 542.5,641.9 717.6,626.4 892.7,587.6 1067.8,564.4 1242.9,703.9 1418.0,703.9" fill="none" stroke="#559c7e" stroke-width="1.3"/><polyline points="367.4,781.4 542.5,610.9 717.6,641.9 892.7,603.1 1067.8,579.9 1242.9,742.6 1418.0,665.1" fill="none" stroke="#efdc9e" stroke-width="1.3"/><circle cx="367.4" cy="781.4" r="5.2" fill="#fff" stroke="#559c7e" stroke-width="1.2"/><circle cx="542.5" cy="641.9" r="5.2" fill="#fff" stroke="#559c7e" stroke-width="1.2"/><circle cx="717.6" cy="626.4" r="5.2" fill="#fff" stroke="#559c7e" stroke-width="1.2"/><circle cx="892.7" cy="587.6" r="5.2" fill="#fff" stroke="#559c7e" stroke-width="1.2"/><circle cx="1067.8" cy="564.4" r="5.2" fill="#fff" stroke="#559c7e" stroke-width="1.2"/><circle cx="1242.9" cy="703.9" r="5.2" fill="#fff" stroke="#559c7e" stroke-width="1.2"/><circle cx="1418.0" cy="703.9" r="5.2" fill="#fff" stroke="#559c7e" stroke-width="1.2"/><circle cx="367.4" cy="781.4" r="5.2" fill="#fff" stroke="#efdc9e" stroke-width="1.2"/><circle cx="542.5" cy="610.9" r="5.2" fill="#fff" stroke="#efdc9e" stroke-width="1.2"/><circle cx="717.6" cy="641.9" r="5.2" fill="#fff" stroke="#efdc9e" stroke-width="1.2"/><circle cx="892.7" cy="603.1" r="5.2" fill="#fff" stroke="#efdc9e" stroke-width="1.2"/><circle cx="1067.8" cy="579.9" r="5.2" fill="#fff" stroke="#efdc9e" stroke-width="1.2"/><circle cx="1242.9" cy="742.6" r="5.2" fill="#fff" stroke="#efdc9e" stroke-width="1.2"/><circle cx="1418.0" cy="665.1" r="5.2" fill="#fff" stroke="#efdc9e" stroke-width="1.2"/><circle cx="1153" cy="831.2" r="5.2" fill="#4dbf82" stroke="#3e9a6a" stroke-width="0.8"/><text x="1172" y="834.8" font-family="Liberation Sans" font-size="10" font-weight="700" fill="#111">Energy Produced</text><circle cx="1300.8" cy="831.2" r="5.2" fill="#fde46c" stroke="#f0d060" stroke-width="0.8"/><text x="1320" y="834.8" font-family="Liberation Sans" font-size="10" font-weight="700" fill="#111">Energy Consumption</text></svg>
<!-- page scrollbar -->
<div class="a sb-track" style="left:1899px;top:1px;width:20px;height:859px"></div>
<div class="a sb-thumb" style="left:1901px;top:83px;width:17px;height:664px"></div>
<svg class="a" style="left:1903px;top:8px" width="12" height="8"><path d="M1 7 L6 2 L11 7Z" fill="#505050"/></svg>
<svg class="a" style="left:1903px;top:854px" width="12" height="6"><path d="M1 0.5 L6 5.5 L11 0.5Z" fill="#505050"/></svg>

</body></html>
